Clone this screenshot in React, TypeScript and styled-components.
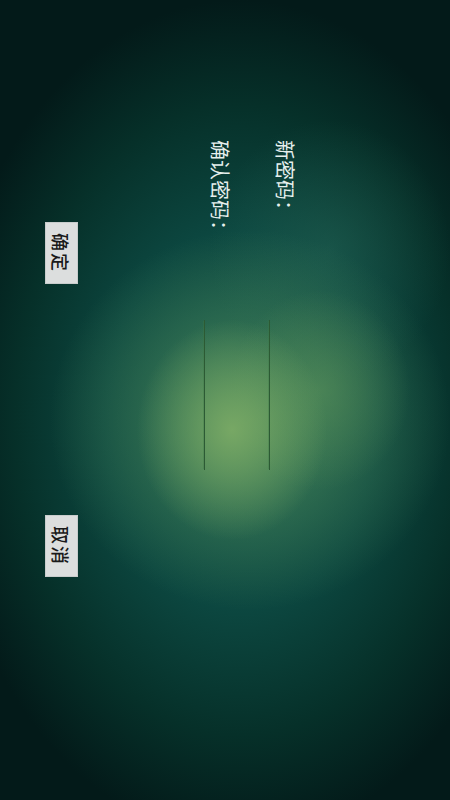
import React from "react";
import styled, { createGlobalStyle } from "styled-components";

const GlobalStyle = createGlobalStyle`
  html, body {
    margin: 0;
    padding: 0;
    background: #041a19;
  }
  * {
    box-sizing: border-box;
  }
`;

const Screen = styled.div`
  position: relative;
  width: 450px;
  height: 800px;
  overflow: hidden;
  font-family: "Noto Sans CJK SC", "Noto Sans", sans-serif;
  background:
    radial-gradient(ellipse 95px 110px at 232px 430px, rgba(125, 172, 102, 0.9), rgba(125, 172, 102, 0) 100%),
    radial-gradient(ellipse 90px 100px at 320px 390px, rgba(90, 145, 90, 0.6), rgba(90, 145, 90, 0) 100%),
    radial-gradient(ellipse 200px 190px at 250px 420px, rgba(78, 138, 88, 0.85), rgba(78, 138, 88, 0) 100%),
    radial-gradient(ellipse 120px 130px at 330px 250px, rgba(40, 105, 88, 0.45), rgba(40, 105, 88, 0) 100%),
    radial-gradient(ellipse 300px 420px at 240px 420px, #1a5f52 0%, #0c4740 45%, #063029 75%, #031a19 100%);
`;

/* the Android activity is landscape; it is drawn 800x450 and turned a quarter clockwise */
const Stage = styled.div`
  position: absolute;
  top: 0;
  left: 0;
  width: 800px;
  height: 450px;
  transform-origin: 0 0;
  transform: translateX(450px) rotate(90deg);
  display: flex;
  flex-direction: column;
  padding: 150px 0 0 140px;
`;

const Form = styled.div`
  display: flex;
  flex-direction: column;
  gap: 34px;
`;

const Row = styled.div`
  display: flex;
  align-items: flex-end;
  height: 31px;
`;

const Label = styled.div`
  width: 180px;
  align-self: flex-start;
  padding-top: 3px;
  color: #e6f0ee;
  font-size: 20px;
  line-height: 24px;
`;

const Field = styled.div`
  width: 150px;
  height: 100%;
  border-bottom: 1px solid #2c5a34;
  box-shadow: 0 2px 0 -1px rgba(60, 120, 70, 0.35);
`;

const Buttons = styled.div`
  display: flex;
  gap: 231px;
  margin-top: 126px;
  padding-left: 82px;
`;

const Button = styled.button`
  width: 62px;
  height: 33px;
  padding: 0;
  border: 1px solid #c8cccc;
  background: #dcdede;
  color: #1a1a1a;
  font-family: "Noto Sans CJK SC", "Noto Sans", sans-serif;
  font-size: 18px;
  font-weight: 500;
  line-height: 1;
  letter-spacing: 2px;
`;

export default function App() {
  return (
    <Screen>
      <GlobalStyle />
      <Stage>
        <Form>
          <Row>
            <Label>新密码：</Label>
            <Field />
          </Row>
          <Row>
            <Label>确认密码：</Label>
            <Field />
          </Row>
        </Form>
        <Buttons>
          <Button>确定</Button>
          <Button>取消</Button>
        </Buttons>
      </Stage>
    </Screen>
  );
}
